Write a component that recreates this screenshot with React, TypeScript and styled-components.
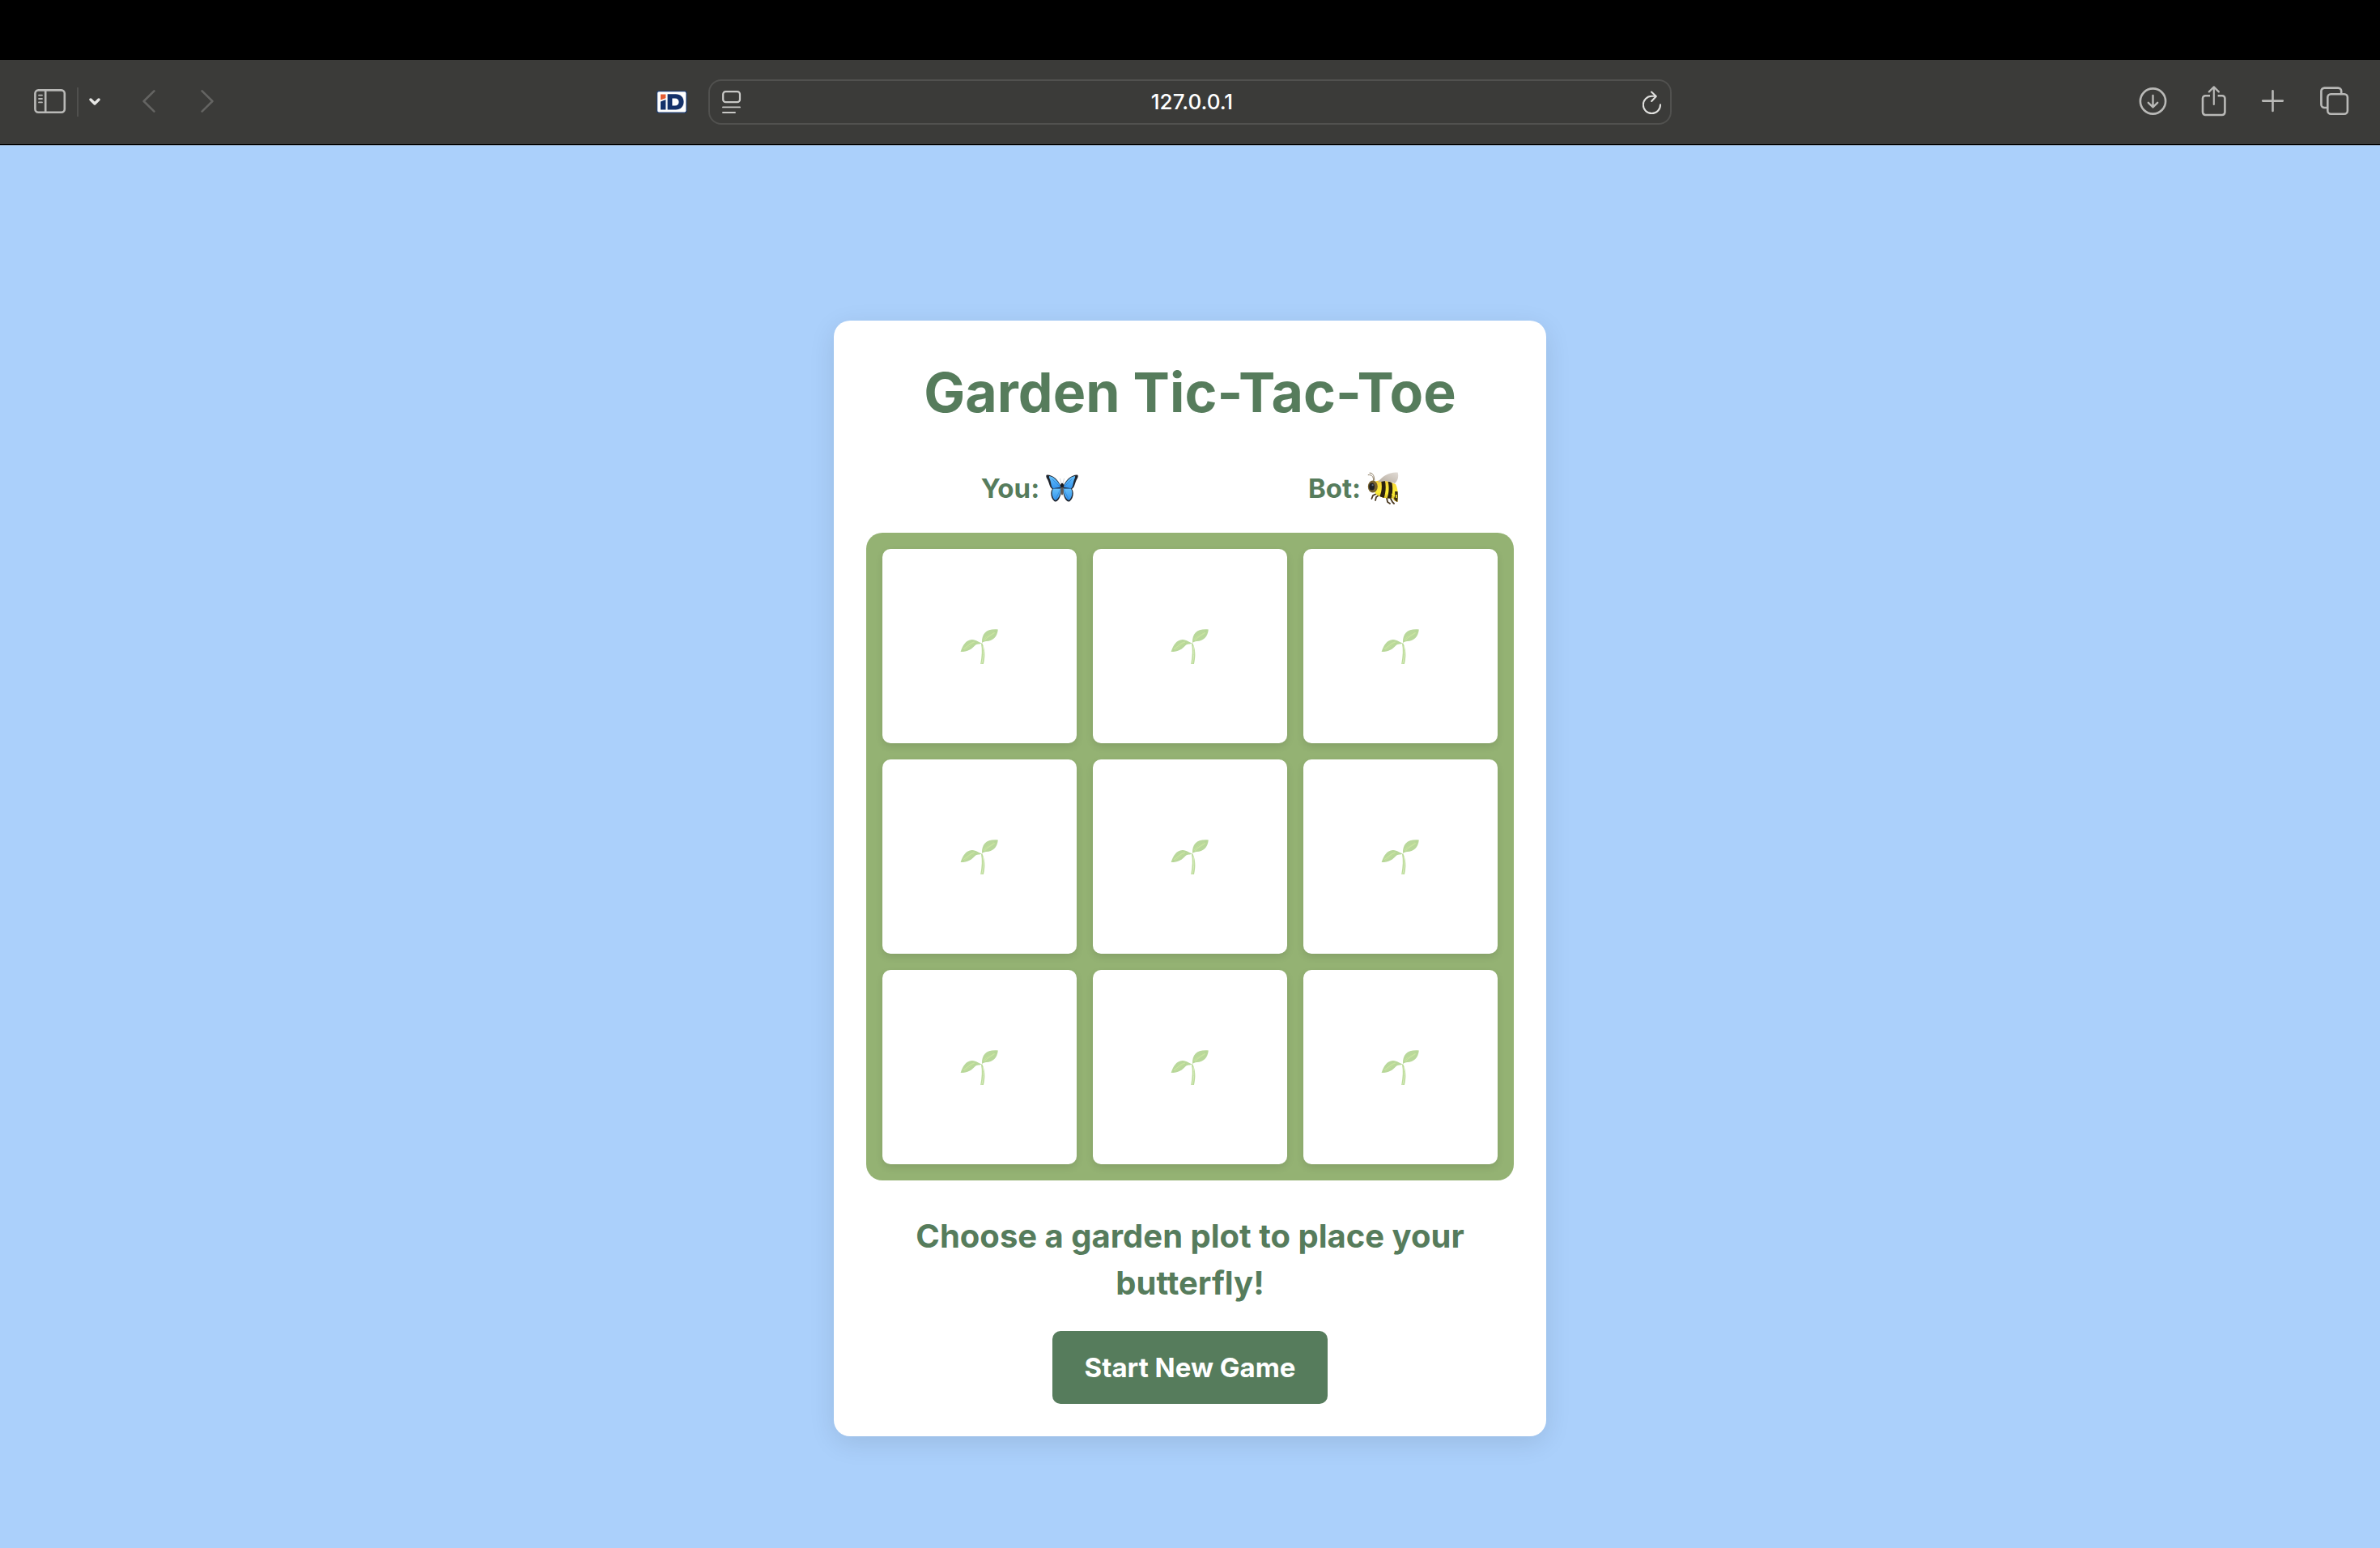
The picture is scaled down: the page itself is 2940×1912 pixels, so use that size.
import React, { useState } from "react";
import styled, { createGlobalStyle } from "styled-components";

const GlobalStyle = createGlobalStyle`
  *, *::before, *::after { box-sizing: border-box; }
  body {
    margin: 0;
    background: #abd0fb;
    font-family: Inter, "Open Sans", sans-serif;
  }
  button, input { font-family: inherit; }
`;

const Screen = styled.div`
  display: flex;
  flex-direction: column;
  min-height: 100vh;
`;

const MenuStrip = styled.div`
  height: 74px;
  background: #000;
`;

const Toolbar = styled.header`
  display: grid;
  grid-template-columns: 1fr minmax(0, 1190px) 1fr;
  align-items: center;
  height: 105px;
  background: #3b3b39;
  border-bottom: 1px solid #000;
  box-shadow: 0 1px 0 #8fa5bd;
`;

const ToolbarSide = styled.div<{ $end?: boolean }>`
  display: flex;
  align-items: center;
  justify-content: ${(p) => (p.$end ? "flex-end" : "space-between")};
  gap: 39px;
  padding: ${(p) => (p.$end ? "0 38px 0 0" : "0 26px 0 42px")};
`;

const NavGroup = styled.div<{ $gap: number }>`
  display: flex;
  align-items: center;
  gap: ${(p) => p.$gap}px;
`;

const Divider = styled.span`
  width: 2px;
  height: 36px;
  background: #50504e;
`;

const IconButton = styled.button<{ $tone?: string }>`
  display: flex;
  padding: 0;
  border: 0;
  background: none;
  color: ${(p) => p.$tone || "#b9b9b7"};

  svg {
    display: block;
    fill: none;
    stroke: currentColor;
    stroke-width: 2.6;
    stroke-linecap: round;
    stroke-linejoin: round;
  }
`;

const ExtensionButton = styled.button`
  display: flex;
  padding: 0;
  border: 0;
  background: none;
`;

const AddressBar = styled.div`
  display: flex;
  align-items: center;
  height: 56px;
  padding: 0 10px 0 15px;
  border: 2px solid #51514f;
  border-radius: 16px;
`;

const AddressInput = styled.input`
  flex: 1;
  min-width: 0;
  border: 0;
  outline: 0;
  background: none;
  color: #fff;
  font-size: 26px;
  font-weight: 500;
  line-height: 32px;
  text-align: center;
`;

const Page = styled.main`
  display: flex;
  flex: 1;
  align-items: center;
  justify-content: center;
  padding-top: 78px;
`;

const Card = styled.section`
  display: flex;
  flex-direction: column;
  align-items: center;
  width: 100%;
  max-width: 880px;
  padding: 40px;
  border-radius: 20px;
  background: #fff;
  box-shadow: 0 8px 32px rgba(0, 0, 0, 0.1);
  color: #567c5c;
  text-align: center;
`;

const Title = styled.h1`
  margin: 0 0 48px;
  font-size: 68px;
  font-weight: 700;
  line-height: 96px;
`;

const Players = styled.div`
  display: flex;
  justify-content: space-around;
  width: 100%;
  margin-bottom: 32px;
`;

const Player = styled.div`
  display: flex;
  align-items: center;
  gap: 8px;
  font-size: 33px;
  font-weight: 700;
  line-height: 46px;
`;

const Board = styled.div`
  display: grid;
  grid-template-columns: repeat(3, 1fr);
  gap: 20px;
  width: 100%;
  padding: 20px;
  border-radius: 20px;
  background: #94b273;
`;

const Plot = styled.button`
  display: flex;
  align-items: center;
  justify-content: center;
  aspect-ratio: 1;
  padding: 0;
  border: 0;
  border-radius: 10px;
  background: #fff;
  box-shadow: 0 4px 10px rgba(0, 0, 0, 0.1);
  cursor: pointer;
`;

const Status = styled.p`
  margin: 40px 0 30px;
  font-size: 40px;
  font-weight: 700;
  line-height: 58px;
`;

const StartButton = styled.button`
  padding: 20px 40px;
  border: 0;
  border-radius: 10px;
  background: #567c5c;
  color: #fff;
  font-size: 33px;
  font-weight: 700;
  line-height: 50px;
  cursor: pointer;
`;

const SidebarIcon = () => (
  <svg width="40" height="40" viewBox="0 0 40 40" aria-hidden="true">
    <rect x="1.4" y="5.4" width="36.4" height="27.4" rx="4" />
    <path d="M14.2 5.4v27.4" />
    <path d="M6 11.6h4M6 16h4M6 20.4h4" strokeWidth="1.8" />
  </svg>
);

const ChevronDownIcon = () => (
  <svg width="14" height="40" viewBox="0 0 14 40" aria-hidden="true">
    <path d="M2 17l5 5 5-5" strokeWidth="3.4" />
  </svg>
);

const ChevronIcon = ({ right }: { right?: boolean }) => (
  <svg width="16" height="40" viewBox="0 0 16 40" aria-hidden="true">
    <path d={right ? "M1.6 6.4L14.4 19L1.6 31.6" : "M14.4 6.4L1.6 19L14.4 31.6"} />
  </svg>
);

const DownloadIcon = () => (
  <svg width="36" height="40" viewBox="0 0 36 40" aria-hidden="true">
    <circle cx="18.5" cy="19" r="15.6" />
    <path d="M18.5 12v14M12.8 20.8l5.7 5.6 5.7-5.6" strokeWidth="2.4" />
  </svg>
);

const ShareIcon = () => (
  <svg width="36" height="40" viewBox="0 0 36 40" aria-hidden="true">
    <path d="M14 12.200H8.400a3.400 3.400 0 0 0-3.400 3.400v17a3.400 3.400 0 0 0 3.400 3.400h20.600a3.400 3.400 0 0 0 3.400-3.400v-17a3.400 3.400 0 0 0-3.400-3.400H23.600" strokeLinecap="butt" />
    <path d="M18.800 23V2M12.800 7.400L18.800 1.400l6 6" strokeWidth="2.2" />
  </svg>
);

const PlusIcon = () => (
  <svg width="36" height="40" viewBox="0 0 36 40" aria-hidden="true">
    <path d="M4.2 18.6h24.6M16.5 6.3v24.6" />
  </svg>
);

const TabsIcon = () => (
  <svg width="36" height="40" viewBox="0 0 36 40" aria-hidden="true">
    <path d="M9 27H5.4a4 4 0 0 1-4-4V6.6a4 4 0 0 1 4-4h16.8a4 4 0 0 1 4 4V9" strokeLinecap="butt" />
    <rect x="9.3" y="10.3" width="24.6" height="24.4" rx="4" />
  </svg>
);

const ReaderIcon = () => (
  <svg width="24" height="40" viewBox="0 0 24 40" aria-hidden="true">
    <rect x="1.2" y="7.2" width="20.8" height="13" rx="3.2" strokeWidth="2.2" />
    <path d="M1 26.4h21M1 33h15" strokeWidth="1.9" />
  </svg>
);

const ReloadIcon = () => (
  <svg width="24" height="40" viewBox="0 0 24 40" aria-hidden="true">
    <path d="M22 23.400A10.600 10.600 0 1 1 11.400 12.800h4.600" strokeWidth="2.1" />
    <path d="M11 7.600l5.800 5.400-5.600 6" strokeWidth="2.1" />
  </svg>
);

const Badge = () => (
  <svg width="38" height="28" viewBox="0 0 38 28" aria-hidden="true">
    <rect x="0.6" y="0.6" width="36.4" height="26.6" rx="2.4" fill="#fff" stroke="#1c3c72" strokeWidth="1.2" />
    <path d="M5 4.6h6.4v4.6L5 11.4z" fill="#e45c33" />
    <path d="M5 13.4l6.4-2.4v12.6H5z" fill="#14316a" />
    <path fillRule="evenodd" d="M13.6 4.2h10.2c6 0 9.8 4 9.8 9.6s-3.8 9.8-9.8 9.8H13.6zM19.4 9.4v9h3.4c3 0 4.8-1.8 4.8-4.5s-1.8-4.5-4.8-4.5z" fill="#14316a" />
  </svg>
);

const Butterfly = () => (
  <svg width="40" height="34" viewBox="0 0 40 34" role="img" aria-label="butterfly">
    <defs>
      <linearGradient id="wing" x1="0" y1="0" x2="0" y2="1">
        <stop offset="0" stopColor="#66c0fa" />
        <stop offset="1" stopColor="#3595ee" />
      </linearGradient>
    </defs>
    <g id="half">
      <path d="M18.6 15C16 7 8.6.4 1.6.4c-2 0-1.4 3 0 5.200C4.600 11 4.200 16 8 18c-3 3.400-2 12 2.600 15.200 4.200 2 8-6 8.200-12.400z" fill="#20242c" />
      <path d="M18.400 15.600C15 8 9.600 2.600 4.200 2c-.8 1 0 2.600.8 4.200C6.800 11 6.200 15.400 9 17.200z" fill="url(#wing)" />
      <path d="M18.400 17.400H9.200c-3 3.400-1.600 11 1.800 14.200 3.200.8 7-6.400 7.200-11.400z" fill="url(#wing)" />
      <path d="M18 16L8 6M18 17l-9 .2M18 18l-5.600 12" stroke="#1f70c8" strokeWidth=".5" fill="none" />
    </g>
    <use href="#half" transform="translate(40 0) scale(-1 1)" />
    <path d="M19 11L17.400 5M21 11l1.600-6" stroke="#aaa" strokeWidth=".5" />
    <ellipse cx="20" cy="14" rx="2" ry="3.200" fill="#17181c" />
    <ellipse cx="20" cy="20.400" rx="1.500" ry="5" fill="#625952" />
  </svg>
);

const Bee = () => (
  <svg width="39" height="40" viewBox="0 0 39 40" role="img" aria-label="bee">
    <defs>
      <linearGradient id="beeBody" x1="0" y1="0" x2="0" y2="1">
        <stop offset="0" stopColor="#f2c63c" />
        <stop offset=".55" stopColor="#fdee35" />
        <stop offset="1" stopColor="#b99218" />
      </linearGradient>
      <linearGradient id="beeWing" x1="0" y1="1" x2="1" y2="0">
        <stop offset="0" stopColor="#b5ab9e" />
        <stop offset="1" stopColor="#e2dcd6" />
      </linearGradient>
      <clipPath id="beeClip">
        <path d="M9 12c8-3 18-1 26 3 3 6 3 12 2.600 22-4-1-5-2-6-4.400-8 .4-17-1-22-6.600z" />
      </clipPath>
    </defs>
    <path d="M11 27l-4 2-1.600 4M15 28l-4 3-1 4M24 32l1 5 3 2M29 33l2 4 2 2" stroke="#4b3a22" strokeWidth="1.800" fill="none" strokeLinecap="round" />
    <g clipPath="url(#beeClip)">
      <rect x="6" y="6" width="33" height="34" fill="url(#beeBody)" />
      <path d="M16.400 8c2.400 8 1.800 16-1.400 23l5.400 1.600c2.800-8 3-16.600 1-23.600z" fill="#2b2110" />
      <path d="M25.400 11c1.800 7 1.600 14-1 22l4.600 1.600c2.600-8 2.800-15.600 1.200-22z" fill="#2b2110" />
      <path d="M34 24c.6 4 0 6-1 9l4 5 2-14z" fill="#3b2d12" />
      <path d="M30.400 27l3.600 3M36 28v4" stroke="#fdee35" strokeWidth="1.600" />
    </g>
    <path d="M13 13C18 5 28-.4 37.600.6 39 5 38 11 34 14c-6-3-12-3.600-21-1z" fill="url(#beeWing)" />
    <path d="M7.400 12C8.400 6.600 6 3 .8 3.600M8.800 10.600C8.600 4 6.400.8 2.600 1.200" stroke="#8d7d63" strokeWidth="1" fill="none" />
    <ellipse cx="6.800" cy="18" rx="6" ry="7.400" fill="#75602e" />
    <ellipse cx="5.600" cy="18" rx="3.400" ry="4.600" fill="#1e2023" />
    <circle cx="6.600" cy="16.200" r="1.100" fill="#5d6d80" />
  </svg>
);

const Sprout = () => (
  <svg width="48" height="44" viewBox="0 0 48 44" aria-hidden="true">
    <path d="M27.400 18.600c3.200 7 4 15.800 1.600 25.400h-3.800C27 34.600 27.400 26 26 19z" fill="#bcdb9b" />
    <path d="M28.200 22c1.200 7 .6 14-1.400 21.600" stroke="#d8edbf" strokeWidth="1" fill="none" />
    <path d="M.6 29C3.400 21 7 14.400 14.600 14 20 13.800 23 18 27.400 18.200c-4 2-6.400.6-9 3C14.600 25.600 9.600 29 .6 29z" fill="#b9d89b" />
    <path d="M27 18C26.600 5.600 33 .2 46.800 1.400 46 11 40 15.600 32.600 16 30 16.400 28.600 17 27 18z" fill="#b9d89b" />
    <path d="M5 25.600c5-2.400 7-6.600 12-7.800M30 14c3-4 7-5 11.600-8.600" stroke="#c8e3a2" strokeWidth="2.600" strokeLinecap="round" fill="none" />
    <path d="M3 27.400C9 24 13 19 19 18M28.600 16C33 9 38 7 44.600 3" stroke="#aed08d" strokeWidth=".6" fill="none" />
  </svg>
);

const plots = Array.from({ length: 9 }, (_, i) => i + 1);

export default function App() {
  const [address, setAddress] = useState("127.0.0.1");

  return (
    <>
      <GlobalStyle />
      <Screen>
        <MenuStrip />
        <Toolbar>
          <ToolbarSide>
            <NavGroup $gap={52}>
              <NavGroup $gap={13}>
                <IconButton aria-label="Show sidebar"><SidebarIcon /></IconButton>
                <Divider />
                <IconButton aria-label="Tab groups" $tone="#e6e6e4"><ChevronDownIcon /></IconButton>
              </NavGroup>
              <NavGroup $gap={56}>
                <IconButton aria-label="Back" $tone="#646462"><ChevronIcon /></IconButton>
                <IconButton aria-label="Forward" $tone="#646462"><ChevronIcon right /></IconButton>
              </NavGroup>
            </NavGroup>
            <ExtensionButton aria-label="iD"><Badge /></ExtensionButton>
          </ToolbarSide>
          <AddressBar>
            <IconButton aria-label="Page menu" $tone="#c8c8c6"><ReaderIcon /></IconButton>
            <AddressInput
              aria-label="Address"
              value={address}
              onChange={(e) => setAddress(e.target.value)}
            />
            <IconButton aria-label="Reload" $tone="#e0e0de"><ReloadIcon /></IconButton>
          </AddressBar>
          <ToolbarSide $end>
            <IconButton aria-label="Downloads"><DownloadIcon /></IconButton>
            <IconButton aria-label="Share"><ShareIcon /></IconButton>
            <IconButton aria-label="New tab"><PlusIcon /></IconButton>
            <IconButton aria-label="Tab overview"><TabsIcon /></IconButton>
          </ToolbarSide>
        </Toolbar>
        <Page>
          <Card>
            <Title>Garden Tic-Tac-Toe</Title>
            <Players>
              <Player>You: <Butterfly /></Player>
              <Player>Bot: <Bee /></Player>
            </Players>
            <Board>
              {plots.map((n) => (
                <Plot key={n} aria-label={`Plot ${n}`}><Sprout /></Plot>
              ))}
            </Board>
            <Status>Choose a garden plot to place your butterfly!</Status>
            <StartButton>Start New Game</StartButton>
          </Card>
        </Page>
      </Screen>
    </>
  );
}
